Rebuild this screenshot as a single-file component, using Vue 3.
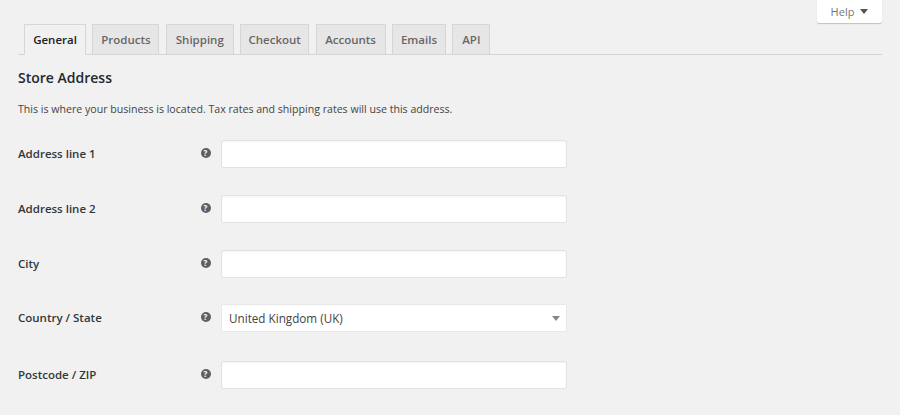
<script setup>
const tabs = [
  { name: 'General', w: 62, active: true },
  { name: 'Products', w: 67 },
  { name: 'Shipping', w: 68 },
  { name: 'Checkout', w: 69 },
  { name: 'Accounts', w: 70 },
  { name: 'Emails', w: 54 },
  { name: 'API', w: 38 },
]
const rows = [
  { label: 'Address line 1', h: 55 },
  { label: 'Address line 2', h: 55 },
  { label: 'City', h: 54 },
  { label: 'Country / State', h: 57, select: 'United Kingdom (UK)' },
  { label: 'Postcode / ZIP', h: 54 },
]
</script>

<template>
  <div class="page">
    <button class="help">Help <span class="tri"></span></button>
    <nav class="tabs">
      <a v-for="t in tabs" :key="t.name" class="tab" :class="{ active: t.active }" :style="{ width: t.w + 'px' }">{{ t.name }}</a>
    </nav>
    <h2>Store Address</h2>
    <p class="desc">This is where your business is located. Tax rates and shipping rates will use this address.</p>
    <div class="form">
      <div v-for="r in rows" :key="r.label" class="row" :style="{ height: r.h + 'px' }">
        <label>{{ r.label }}</label>
        <span class="tip">?</span>
        <div v-if="r.select" class="field select">{{ r.select }}<span class="arrow"></span></div>
        <input v-else class="field" type="text" />
      </div>
    </div>
  </div>
</template>

<style scoped>
.page {
  position: relative;
  width: 900px;
  height: 415px;
  overflow: hidden;
  background: #f1f1f1;
  font-family: "Open Sans", "Noto Sans", sans-serif;
  font-size: 12px;
  color: #444;
  padding: 24px 18px 0;
  box-sizing: border-box;
}
.help {
  position: absolute;
  top: 0;
  left: 817px;
  width: 65px;
  height: 23px;
  padding: 0 0 1px;
  background: #fff;
  border: 0;
  border-radius: 0 0 2px 2px;
  box-shadow: 0 1px 1px rgba(0, 0, 0, .2);
  font: 11px "Open Sans", sans-serif;
  color: #72777c;
  display: flex;
  align-items: center;
  justify-content: center;
  gap: 6px;
}
.tri {
  width: 0;
  height: 0;
  border-left: 4px solid transparent;
  border-right: 4px solid transparent;
  border-top: 5px solid #555;
}
.tabs {
  display: flex;
  gap: 6.4px;
  height: 31px;
  padding-left: 6px;
  width: 864px;
  box-sizing: border-box;
  border-bottom: 1px solid #d4d4d4;
}
.tab {
  box-sizing: border-box;
  height: 31px;
  display: flex;
  align-items: center;
  justify-content: center;
  background: #e6e6e6;
  border: 1px solid #d6d6d6;
  font-weight: 600;
  font-size: 11.5px;
  color: #666;
}
.tab.active {
  background: #f1f1f1;
  border-bottom-color: #f1f1f1;
  color: #222;
}
h2 {
  margin: 13px 0 0;
  font-size: 14px;
  line-height: 20px;
  font-weight: 600;
  color: #23282d;
}
.desc {
  margin: 12px 0 0;
  font-size: 10.6px;
  line-height: 18px;
  color: #444;
}
.form {
  margin-top: 22px;
}
.row {
  display: flex;
  align-items: flex-start;
}
label {
  width: 182.5px;
  flex: none;
  font-weight: 600;
  font-size: 11.5px;
  line-height: 27px;
  color: #32373c;
}
.tip {
  flex: none;
  width: 10px;
  height: 10px;
  margin-top: 8px;
  border-radius: 50%;
  background: #5f5f5f;
  color: #fff;
  font-size: 8px;
  font-weight: 700;
  line-height: 10px;
  text-align: center;
}
.field {
  flex: none;
  box-sizing: border-box;
  width: 346px;
  height: 28px;
  margin-left: 10.5px;
  padding: 0 7px;
  background: #fff;
  border: 1px solid #e2e2e2;
  border-radius: 2px;
  box-shadow: inset 0 1px 2px rgba(0, 0, 0, .05);
  outline: none;
}
.select {
  position: relative;
  display: flex;
  align-items: center;
  font-size: 11.7px;
  color: #444;
  box-shadow: none;
  border-color: #e8e8e8;
}
.arrow {
  position: absolute;
  right: 6px;
  top: 11px;
  width: 0;
  height: 0;
  border-left: 4px solid transparent;
  border-right: 4px solid transparent;
  border-top: 5px solid #888;
}
</style>
